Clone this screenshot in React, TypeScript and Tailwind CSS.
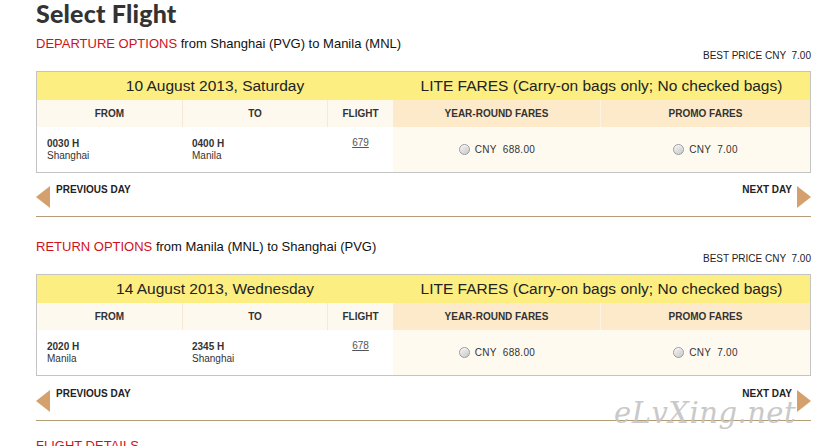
import React from "react";

interface Leg {
  label: string;
  route: string;
  date: string;
  fromTime: string;
  fromCity: string;
  toTime: string;
  toCity: string;
  flight: string;
}

const legs: Leg[] = [
  {
    label: "DEPARTURE OPTIONS",
    route: "from Shanghai (PVG) to Manila (MNL)",
    date: "10 August 2013, Saturday",
    fromTime: "0030 H",
    fromCity: "Shanghai",
    toTime: "0400 H",
    toCity: "Manila",
    flight: "679",
  },
  {
    label: "RETURN OPTIONS",
    route: "from Manila (MNL) to Shanghai (PVG)",
    date: "14 August 2013, Wednesday",
    fromTime: "2020 H",
    fromCity: "Manila",
    toTime: "2345 H",
    toCity: "Shanghai",
    flight: "678",
  },
];

function Radio() {
  return (
    <span className="inline-block w-[11px] h-[11px] rounded-full border border-[#9a9a9a] bg-gradient-to-br from-[#f4f4f4] to-[#c9c9c9] shadow-[inset_0_1px_1px_rgba(255,255,255,0.8)]" />
  );
}

function Fare({ amount }: { amount: string }) {
  return (
    <div className="flex items-center justify-center gap-[5px] text-[10px] tracking-[0.3px] text-[#333]">
      <Radio />
      <span className="whitespace-pre">{`CNY  ${amount}`}</span>
    </div>
  );
}

function LegBlock({ leg, navGap }: { leg: Leg; navGap: string }) {
  return (
    <div>
      <div className="text-[13px] leading-[14px] h-[14px]">
        <span className="text-[#d0101c]">{leg.label}</span>{" "}
        <span className="text-[#111]">{leg.route}</span>
      </div>
      <div className="text-right text-[10px] leading-[10px] text-[#222] whitespace-pre">
        {"BEST PRICE CNY  7.00"}
      </div>

      {/* fares table */}
      <div className="mt-[10px] border border-[#c4c4c4]">
        <div className="grid grid-cols-[146px_145px_65px_208px_1fr] text-[#222]">
          <div className="col-span-3 h-[28px] bg-[#fcee80] flex items-center justify-center text-[15.5px]">
            {leg.date}
          </div>
          <div className="col-span-2 h-[28px] bg-[#fcee80] flex items-center justify-center text-[15.5px]">
            LITE FARES (Carry-on bags only; No checked bags)
          </div>

          <div className="h-[27px] bg-[#fef9ee] border-r border-[#f6ead6] flex items-center justify-center text-[10px] font-bold text-[#333]">FROM</div>
          <div className="h-[27px] bg-[#fef9ee] border-r border-[#f6ead6] flex items-center justify-center text-[10px] font-bold text-[#333]">TO</div>
          <div className="h-[27px] bg-[#fef9ee] flex items-center justify-center text-[10px] font-bold text-[#333]">FLIGHT</div>
          <div className="h-[27px] bg-[#fdeacb] border-r border-[#fdf3e2] flex items-center justify-center text-[10px] font-bold text-[#333]">YEAR-ROUND FARES</div>
          <div className="h-[27px] bg-[#fdeacb] flex items-center justify-center text-[10px] font-bold text-[#333]">PROMO FARES</div>

          <div className="h-[45px] bg-white pl-[10px] pt-[11px] text-[10px] leading-[12px] text-[#333]">
            <div className="font-bold">{leg.fromTime}</div>
            <div>{leg.fromCity}</div>
          </div>
          <div className="h-[45px] bg-white pl-[9px] pt-[11px] text-[10px] leading-[12px] text-[#333]">
            <div className="font-bold">{leg.toTime}</div>
            <div>{leg.toCity}</div>
          </div>
          <div className="h-[45px] bg-white pt-[10px] text-center text-[10px] leading-[12px] text-[#555]">
            <span className="underline">{leg.flight}</span>
          </div>
          <div className="h-[45px] bg-[#fffaf0] flex items-center justify-center">
            <Fare amount="688.00" />
          </div>
          <div className="h-[45px] bg-[#fffaf0] flex items-center justify-center">
            <Fare amount="7.00" />
          </div>
        </div>
      </div>

      {/* day navigation */}
      <div className={`flex justify-between h-[23px] ${navGap}`}>
        <div className="flex items-start">
          <span className="w-0 h-0 mt-[1px] border-y-[11px] border-y-transparent border-r-[14px] border-r-[#d4a16c]" />
          <span className="ml-[6px] text-[10px] font-bold text-[#222] leading-[10px]">PREVIOUS DAY</span>
        </div>
        <div className="flex items-start">
          <span className="mr-[5px] text-[10px] font-bold text-[#222] leading-[10px]">NEXT DAY</span>
          <span className="w-0 h-0 mt-[1px] border-y-[11px] border-y-transparent border-l-[14px] border-l-[#d4a16c]" />
        </div>
      </div>
      <div className="mt-[8px] h-px bg-[#b39c76]" />
    </div>
  );
}

export default function App() {
  return (
    <div className="relative w-[822px] h-[446px] overflow-hidden bg-white font-['Liberation_Sans',Arial,sans-serif]">
      <div className="pl-[36px] w-[811px]">
        <h1 className="font-['Lato',sans-serif] font-black text-[25px] leading-[26px] text-[#333] tracking-[0.2px]">
          Select Flight
        </h1>
        <div className="mt-[11px]">
          <LegBlock leg={legs[0]} navGap="mt-[12px]" />
        </div>
        <div className="mt-[23px]">
          <LegBlock leg={legs[1]} navGap="mt-[13px]" />
        </div>
        <div className="mt-[18px] text-[13px] leading-[14px] text-[#d0101c]">FLIGHT DETAILS</div>
      </div>

      {/* watermark */}
      <div className="absolute left-[614px] top-[396px] font-['DejaVu_Serif',serif] italic text-[29px] leading-[34px] text-[#c4c4c4] opacity-90 tracking-[0.5px] pointer-events-none">
        eLvXing.net
      </div>
    </div>
  );
}
